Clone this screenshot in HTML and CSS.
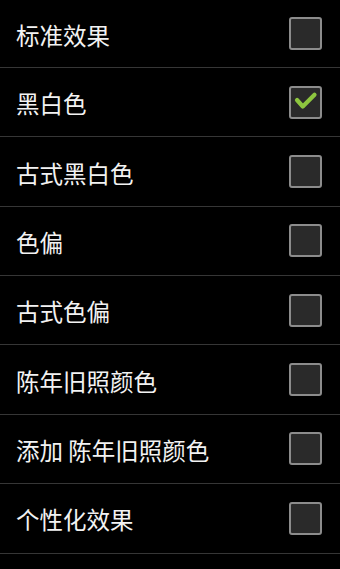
FILE: index.html
```html
<!DOCTYPE html>
<html lang="zh">
<head>
<meta charset="utf-8">
<link rel="stylesheet" href="styles.css">
</head>
<body>
<ul class="list">
  <li class="row"><span class="label">标准效果</span><span class="box"></span></li>
  <li class="row"><span class="label">黑白色</span><span class="box checked"><svg viewBox="0 0 33 33" width="33" height="33"><path d="M8 14 L13.8 20.5 L25.5 8.8" fill="none" stroke="#8dc63f" stroke-width="4.2" stroke-linecap="round" stroke-linejoin="round"/></svg></span></li>
  <li class="row"><span class="label">古式黑白色</span><span class="box"></span></li>
  <li class="row"><span class="label">色偏</span><span class="box"></span></li>
  <li class="row"><span class="label">古式色偏</span><span class="box"></span></li>
  <li class="row"><span class="label">陈年旧照颜色</span><span class="box"></span></li>
  <li class="row"><span class="label">添加 陈年旧照颜色</span><span class="box"></span></li>
  <li class="row"><span class="label">个性化效果</span><span class="box"></span></li>
</ul>
</body>
</html>
```
FILE: styles.css
```css
html, body {
  margin: 0;
  padding: 0;
  background: #000;
  height: 100%;
  overflow: hidden;
}
.list {
  list-style: none;
  margin: 0;
  padding: 0;
}
.row {
  display: flex;
  align-items: center;
  justify-content: space-between;
  box-sizing: border-box;
  height: 69.36px;
  padding: 0 18px 0 16px;
  border-bottom: 1px solid #363636;
}
.row:first-child {
  height: 68px;
}
.label {
  font-family: "Noto Sans CJK SC", "Noto Sans", sans-serif;
  font-size: 23.5px;
  color: #f2f2f2;
  padding-top: 2px;
}
.box {
  width: 33px;
  height: 33px;
  box-sizing: border-box;
  border: 2px solid #8c8c8c;
  border-radius: 3px;
  background: #2a2a2a;
  position: relative;
}
.box svg {
  position: absolute;
  left: -2px;
  top: -2px;
}
```
